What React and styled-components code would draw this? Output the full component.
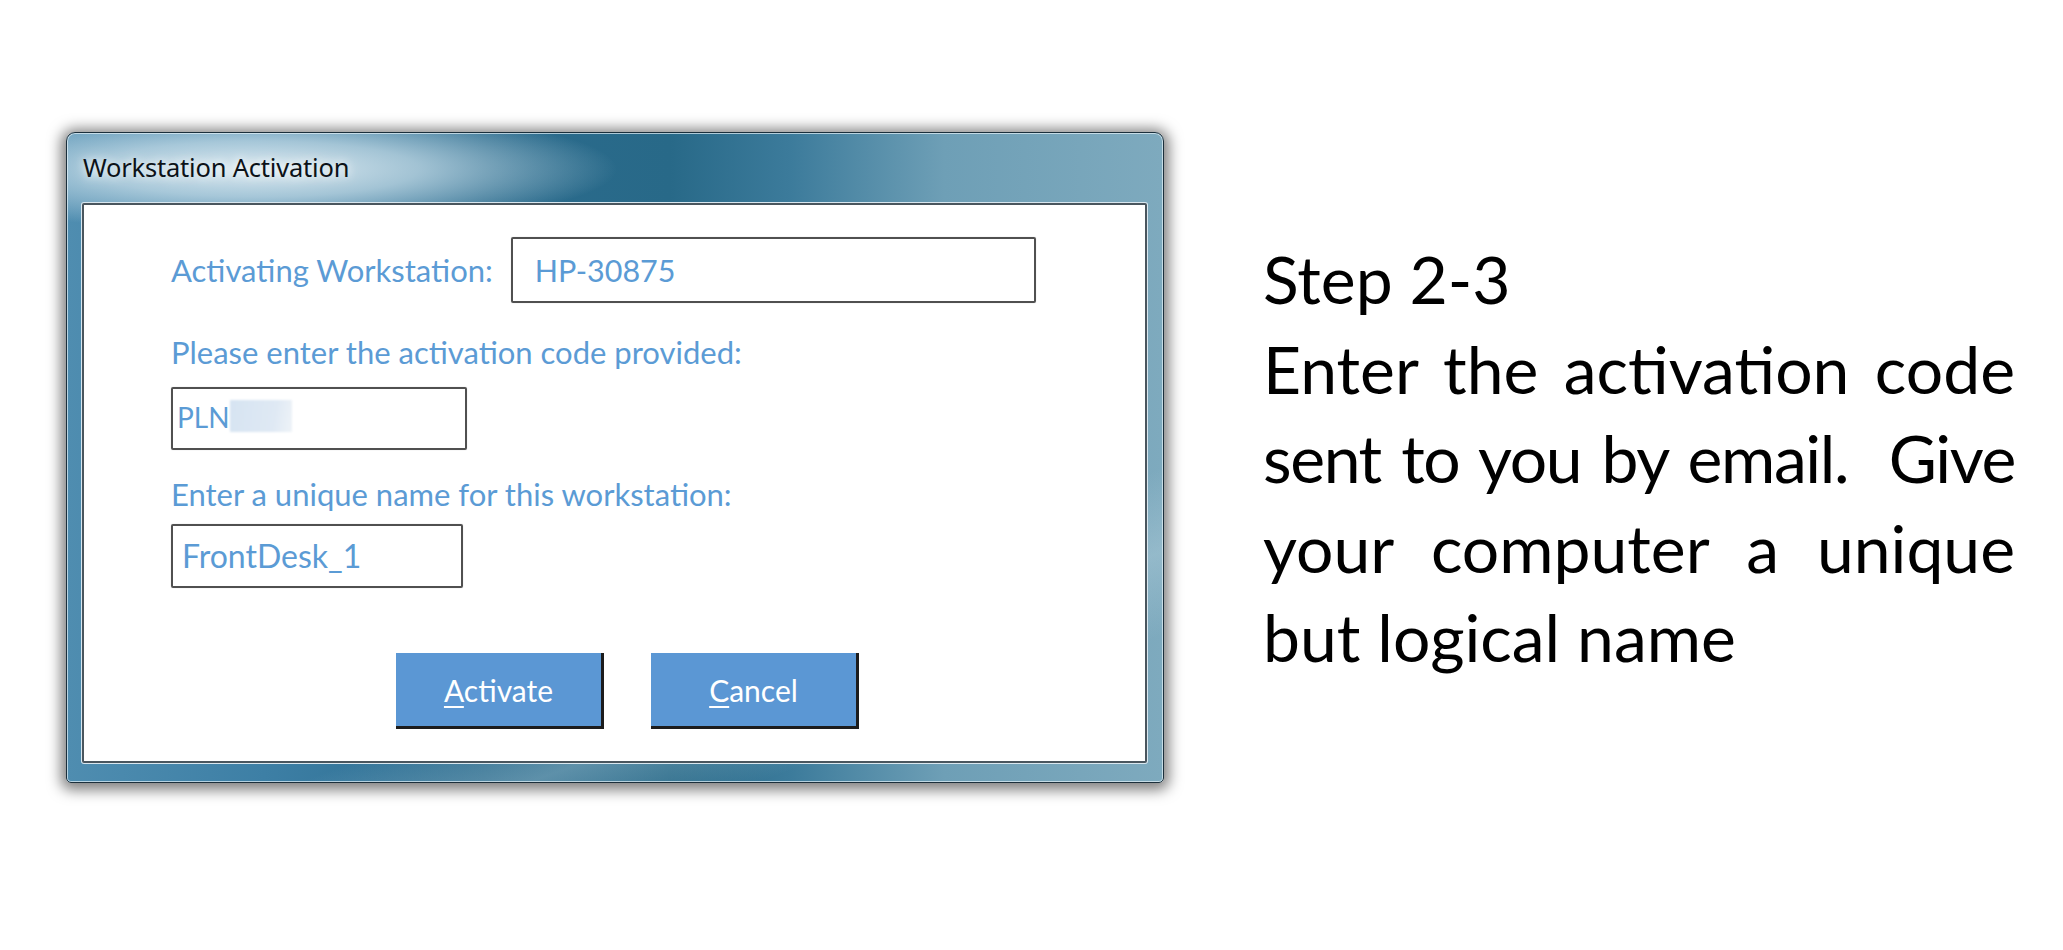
import React from 'react'
import styled, { createGlobalStyle } from 'styled-components'

const GlobalStyle = createGlobalStyle`
    html, body {
        margin: 0;
        padding: 0;
        background: #ffffff;
    }
`

const Page = styled.div`
    width: 2063px;
    height: 950px;
    display: flex;
    align-items: flex-start;
    padding: 132px 0 0 66px;
    box-sizing: border-box;
    background: #ffffff;
`

const Window = styled.div`
    width: 1098px;
    height: 651px;
    flex-shrink: 0;
    display: flex;
    flex-direction: column;
    box-sizing: border-box;
    border: 1px solid #1b2f3b;
    border-radius: 9px 9px 5px 5px;
    box-shadow: 0 2px 14px 5px rgba(0, 0, 0, 0.5), inset 0 0 0 1px rgba(230, 242, 248, 0.7);
    background:
        radial-gradient(ellipse 360px 62px at 190px 36px, rgba(226, 238, 244, 0.97) 0%, rgba(200, 222, 233, 0.75) 45%, rgba(160, 196, 214, 0) 100%),
        linear-gradient(160deg, rgba(255,255,255,0) 70%, rgba(190, 215, 226, 0.35) 78%, rgba(255,255,255,0) 86%),
        linear-gradient(90deg, #4f8db0 0%, #3d7fa5 18%, #2b6b8d 38%, #286988 55%, #3c7b9b 66%, #6e9fb6 80%, #7eaabe 100%);
`

const TitleBar = styled.div`
    height: 70px;
    display: flex;
    align-items: center;
    padding-left: 16px;
    padding-bottom: 2px;
    box-sizing: border-box;
`

const Title = styled.span`
    font-family: "Noto Sans", "Open Sans", sans-serif;
    font-size: 25.5px;
    color: #0c1218;
    letter-spacing: -0.2px;
    text-shadow: 0 0 8px rgba(255, 255, 255, 0.9), 0 0 16px rgba(255, 255, 255, 0.7);
`

const Panel = styled.div`
    flex: 1;
    margin: 0 16px 19px 15px;
    background: #ffffff;
    border: 2px solid #4a565e;
    border-radius: 2px;
    box-shadow: 0 0 0 1px #d9e7ef;
    display: flex;
    flex-direction: column;
    padding: 32px 0 0 87px;
    box-sizing: border-box;
`

const Row = styled.div`
    display: flex;
    align-items: center;
    gap: 18px;
`

const Label = styled.div`
    font-family: "Lato", "Liberation Sans", sans-serif;
    font-size: 31px;
    line-height: 38px;
    color: #5b9bd5;
    margin-top: ${p => p.top || 0}px;
    margin-bottom: ${p => p.bottom || 0}px;
`

const Field = styled.div`
    width: ${p => p.w}px;
    height: ${p => p.h}px;
    box-sizing: border-box;
    border: 2px solid #505050;
    border-radius: 2px;
    box-shadow: 0 0 1px rgba(0, 0, 0, 0.3);
    display: flex;
    align-items: ${p => (p.top ? 'flex-start' : 'center')};
    padding-left: ${p => p.pad}px;
    padding-top: ${p => (p.top ? p.top : 0)}px;
    font-family: "Lato", "Liberation Sans", sans-serif;
    font-size: ${p => p.size || 29}px;
    line-height: 36px;
    color: #5b9bd5;
`

const Blurred = styled.span`
    display: inline-block;
    width: 62px;
    height: 32px;
    margin-top: 1px;
    background: linear-gradient(100deg, #d6e4f2 0%, #dfe9f4 70%, #eef3f8 100%);
    filter: blur(1px);
`

const Buttons = styled.div`
    display: flex;
    gap: 47px;
    margin-top: 65px;
    padding-left: 225px;
`

const Button = styled.div`
    width: 208px;
    height: 76px;
    box-sizing: border-box;
    background: #5b97d4;
    border-right: 3px solid #1c1c1c;
    border-bottom: 3px solid #1c1c1c;
    display: flex;
    align-items: center;
    justify-content: center;
    font-family: "Lato", "Liberation Sans", sans-serif;
    font-size: 30px;
    color: #ffffff;
    u {
        text-decoration-thickness: 2px;
        text-underline-offset: 4px;
    }
`

const Steps = styled.div`
    width: 752px;
    margin-left: 99px;
    margin-top: 102px;
    font-family: "Lato", "Liberation Sans", sans-serif;
    font-size: 66px;
    line-height: 89.5px;
    color: #000000;
`

const Line = styled.div`
    text-align: ${p => (p.justify ? 'justify' : 'left')};
    text-align-last: ${p => (p.justify ? 'justify' : 'left')};
    letter-spacing: ${p => (p.tight ? '-1.4px' : '0')};
    word-spacing: ${p => (p.tight ? '-4px' : '0')};
    white-space: nowrap;
`

export default function App() {
    return (
        <Page>
            <GlobalStyle />
            <Window>
                <TitleBar>
                    <Title>Workstation Activation</Title>
                </TitleBar>
                <Panel>
                    <Row>
                        <Label>Activating Workstation:</Label>
                        <Field w={525} h={66} pad={22} size={30.5}>HP-30875</Field>
                    </Row>
                    <Label top={30} bottom={16}>Please enter the activation code provided:</Label>
                    <Field w={296} h={63} pad={4} top={10} size={28}>
                        PLN<Blurred />
                    </Field>
                    <Label top={25} bottom={11}>Enter a unique name for this workstation:</Label>
                    <Field w={292} h={64} pad={9} size={32}>FrontDesk_1</Field>
                    <Buttons>
                        <Button><span><u>A</u>ctivate</span></Button>
                        <Button><span><u>C</u>ancel</span></Button>
                    </Buttons>
                </Panel>
            </Window>
            <Steps>
                <Line>Step 2-3</Line>
                <Line justify>Enter the activation code</Line>
                <Line justify tight>sent to you by email.&nbsp; Give</Line>
                <Line justify>your computer a unique</Line>
                <Line>but logical name</Line>
            </Steps>
        </Page>
    )
}
